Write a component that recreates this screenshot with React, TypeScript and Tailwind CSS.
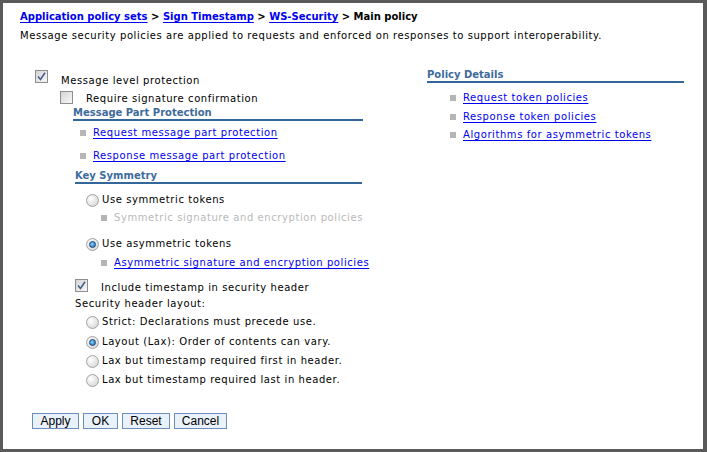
import React from "react";

function Checkbox({ checked }: { checked?: boolean }) {
  return (
    <span className="relative inline-block w-[13px] h-[13px] shrink-0 border border-[#8e8e8e] bg-linear-to-br from-[#d4d4d4] to-[#f8f8f8]">
      {checked && (
        <svg className="absolute left-[1px] top-[1px]" width="9" height="9" viewBox="0 0 9 9">
          <path d="M1 4.5 L3.5 7.5 L8 0.8" stroke="#4b5f8e" strokeWidth="1.6" fill="none" />
        </svg>
      )}
    </span>
  );
}

function Radio({ checked }: { checked?: boolean }) {
  return (
    <span className="relative inline-flex items-center justify-center w-[13px] h-[13px] shrink-0 rounded-full border border-[#a2a2a2] bg-[radial-gradient(circle_at_35%_35%,#ffffff,#cfcfcf)]">
      {checked && (
        <span className="block w-[7px] h-[7px] rounded-full border border-[#1b3f6e] bg-[radial-gradient(circle_at_40%_40%,#7fd0ff,#1a6fb8)]" />
      )}
    </span>
  );
}

function Bullet() {
  return <span className="block w-[6px] h-[6px] bg-[#b5b5b5] shrink-0" />;
}

function Link({ children }: { children: React.ReactNode }) {
  return <span className="text-[#0000ee] underline underline-offset-[2px]">{children}</span>;
}

function Heading({ children, w }: { children: React.ReactNode; w: string }) {
  return (
    <div className={`${w} h-[15px] leading-[13px] font-bold tracking-normal text-[#3d6b9c] border-b-2 border-[#336699]`}>
      {children}
    </div>
  );
}

export default function App() {
  return (
    <div className="w-[707px] h-[452px] box-border border-l-[3px] border-t-[3px] border-r-[4px] border-b-[3px] border-[#5a5a5a] bg-white font-['DejaVu_Sans',Verdana,sans-serif] text-[10px] leading-[14px] tracking-[0.58px] text-black overflow-hidden">
      <div className="pl-[17px] pt-[7px]">
        <div className="font-bold tracking-normal">
          <Link>Application policy sets</Link> &gt; <Link>Sign Timestamp</Link> &gt; <Link>WS-Security</Link> &gt; Main policy
        </div>
        <div className="mt-[5px]">
          Message security policies are applied to requests and enforced on responses to support interoperability.
        </div>
      </div>

      <div className="flex mt-[25px]">
        {/* Left column */}
        <div className="w-[392px] pl-[32px] pt-[2px] flex flex-col">
          <div className="flex items-start h-[20px]">
            <Checkbox checked />
            <span className="ml-[13px] mt-[4px]">Message level protection</span>
          </div>
          <div className="flex items-start h-[16px] pl-[25px]">
            <span className="mt-[1px]"><Checkbox /></span>
            <span className="ml-[13px] mt-[2px]">Require signature confirmation</span>
          </div>
          <div className="pl-[38px]">
            <Heading w="w-[290px]">Message Part Protection</Heading>
          </div>
          <div className="flex items-center pl-[45px] mt-[5px] h-[14px]">
            <Bullet />
            <span className="ml-[7px]"><Link>Request message part protection</Link></span>
          </div>
          <div className="flex items-center pl-[45px] mt-[9px] h-[14px]">
            <Bullet />
            <span className="ml-[7px]"><Link>Response message part protection</Link></span>
          </div>
          <div className="pl-[40px] mt-[6px]">
            <Heading w="w-[287px]">Key Symmetry</Heading>
          </div>
          <div className="flex items-center pl-[51px] mt-[9px] h-[14px]">
            <Radio />
            <span className="ml-[3px]">Use symmetric tokens</span>
          </div>
          <div className="flex items-center pl-[66px] mt-[4px] h-[14px]">
            <Bullet />
            <span className="ml-[7px] text-[#b9b9b9]">Symmetric signature and encryption policies</span>
          </div>
          <div className="flex items-center pl-[51px] mt-[12px] h-[14px]">
            <Radio checked />
            <span className="ml-[3px]">Use asymmetric tokens</span>
          </div>
          <div className="flex items-center pl-[66px] mt-[5px] h-[14px]">
            <Bullet />
            <span className="ml-[7px]"><Link>Asymmetric signature and encryption policies</Link></span>
          </div>
          <div className="flex items-start pl-[40px] mt-[9px] h-[18px]">
            <Checkbox checked />
            <span className="ml-[13px] mt-[2px]">Include timestamp in security header</span>
          </div>
          <div className="pl-[40px] h-[14px]">Security header layout:</div>
          <div className="flex items-center pl-[51px] mt-[4px] h-[14px]">
            <Radio />
            <span className="ml-[3px]">Strict: Declarations must precede use.</span>
          </div>
          <div className="flex items-center pl-[51px] mt-[6px] h-[14px]">
            <Radio checked />
            <span className="ml-[3px]">Layout (Lax): Order of contents can vary.</span>
          </div>
          <div className="flex items-center pl-[51px] mt-[5px] h-[14px]">
            <Radio />
            <span className="ml-[3px]">Lax but timestamp required first in header.</span>
          </div>
          <div className="flex items-center pl-[51px] mt-[5px] h-[14px]">
            <Radio />
            <span className="ml-[3px]">Lax but timestamp required last in header.</span>
          </div>
        </div>

        {/* Right column */}
        <div className="pl-[32px] flex flex-col">
          <Heading w="w-[257px]">Policy Details</Heading>
          <div className="flex items-center pl-[23px] mt-[8px] h-[14px]">
            <Bullet />
            <span className="ml-[7px]"><Link>Request token policies</Link></span>
          </div>
          <div className="flex items-center pl-[23px] mt-[5px] h-[14px]">
            <Bullet />
            <span className="ml-[7px]"><Link>Response token policies</Link></span>
          </div>
          <div className="flex items-center pl-[23px] mt-[4px] h-[14px]">
            <Bullet />
            <span className="ml-[7px]"><Link>Algorithms for asymmetric tokens</Link></span>
          </div>
        </div>
      </div>

      <div className="flex gap-[4px] pl-[29px] mt-[26px] font-['Liberation_Sans',Arial,sans-serif] text-[12px] tracking-normal">
        {[
          ["Apply", "w-[47px]"],
          ["OK", "w-[35px]"],
          ["Reset", "w-[48px]"],
          ["Cancel", "w-[53px]"],
        ].map(([t, w]) => (
          <button
            key={t}
            className={`${w} h-[16px] leading-[14px] border border-[#6c8fb9] bg-[#e9f1fb] text-black text-center`}
          >
            {t}
          </button>
        ))}
      </div>
    </div>
  );
}
